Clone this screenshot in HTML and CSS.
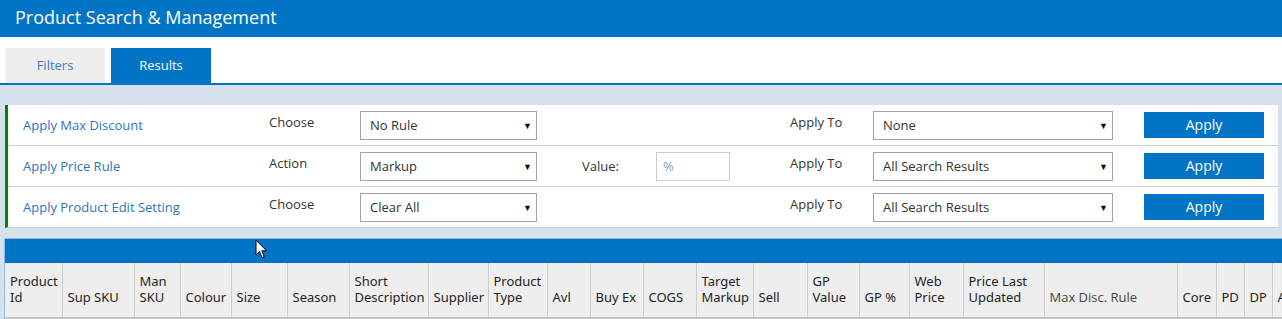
FILE: index.html
```html
<!DOCTYPE html>
<html lang="en">
<head>
  <meta charset="UTF-8">
  <title>Product Search &amp; Management</title>
  <link rel="stylesheet" href="styles.css">
</head>
<body>
  <header class="top-bar">Product Search &amp; Management</header>

  <nav class="tabs">
    <a class="tab">Filters</a>
    <a class="tab active">Results</a>
  </nav>

  <main class="content">
    <!-- Bulk actions -->
    <section class="actions">
      <div class="action-row">
        <a class="action-name">Apply Max Discount</a>
        <span class="field-label">Choose</span>
        <span class="select-wrap narrow"><select><option>No Rule</option></select></span>
        <span></span>
        <span></span>
        <span class="field-label">Apply To</span>
        <span class="select-wrap wide"><select><option>None</option></select></span>
        <button class="btn">Apply</button>
      </div>
      <div class="action-row">
        <a class="action-name">Apply Price Rule</a>
        <span class="field-label">Action</span>
        <span class="select-wrap narrow"><select><option>Markup</option></select></span>
        <span class="value-label">Value:</span>
        <span><input class="value-input" type="text" placeholder="%"></span>
        <span class="field-label">Apply To</span>
        <span class="select-wrap wide"><select><option>All Search Results</option></select></span>
        <button class="btn">Apply</button>
      </div>
      <div class="action-row">
        <a class="action-name">Apply Product Edit Setting</a>
        <span class="field-label">Choose</span>
        <span class="select-wrap narrow"><select><option>Clear All</option></select></span>
        <span></span>
        <span></span>
        <span class="field-label">Apply To</span>
        <span class="select-wrap wide"><select><option>All Search Results</option></select></span>
        <button class="btn">Apply</button>
      </div>
    </section>

    <!-- Results grid -->
    <section class="grid">
      <div class="grid-bar"></div>
      <table class="results">
        <colgroup>
          <col style="width:57px"><col style="width:72px"><col style="width:46px"><col style="width:51px">
          <col style="width:56px"><col style="width:62px"><col style="width:79px"><col style="width:60px">
          <col style="width:59px"><col style="width:43px"><col style="width:53px"><col style="width:53px">
          <col style="width:57px"><col style="width:54px"><col style="width:52px"><col style="width:50px">
          <col style="width:54px"><col style="width:81px"><col style="width:133px"><col style="width:39px">
          <col style="width:28px"><col style="width:28px"><col style="width:40px">
        </colgroup>
        <thead>
          <tr>
            <th>Product<br>Id</th>
            <th>Sup SKU</th>
            <th>Man<br>SKU</th>
            <th>Colour</th>
            <th>Size</th>
            <th>Season</th>
            <th>Short<br>Description</th>
            <th>Supplier</th>
            <th>Product<br>Type</th>
            <th>Avl</th>
            <th>Buy Ex</th>
            <th>COGS</th>
            <th>Target<br>Markup</th>
            <th>Sell</th>
            <th>GP<br>Value</th>
            <th>GP %</th>
            <th>Web<br>Price</th>
            <th>Price Last<br>Updated</th>
            <th class="light">Max Disc. Rule</th>
            <th>Core</th>
            <th>PD</th>
            <th>DP</th>
            <th>Active</th>
          </tr>
        </thead>
      </table>
    </section>
  </main>

  <svg class="cursor" width="13" height="20" viewBox="0 0 13 20">
    <path d="M1 1 L1 16 L4.5 12.5 L7 18.5 L9.2 17.6 L6.8 11.8 L11.5 11.8 Z" fill="#fff" stroke="#000" stroke-width="1"/>
  </svg>
</body>
</html>
```

FILE: styles.css
```css
body {
  margin: 0;
  font-family: "Open Sans", Arial, sans-serif;
  font-size: 13px;
  color: #333;
  background: #d7e1ec;
  overflow: hidden;
}

.top-bar {
  height: 37px;
  line-height: 34px;
  padding-left: 15px;
  background: #0274c6;
  color: #fff;
  font-size: 18px;
}

.tabs {
  display: flex;
  gap: 6px;
  padding: 11px 0 0 5px;
  background: #fff;
  border-bottom: 2px solid #0274c6;
}

.tab {
  width: 100px;
  height: 35px;
  line-height: 35px;
  text-align: center;
  background: #eee;
  color: #3d7cc9;
  font-size: 13px;
}

.tab.active {
  background: #0274c6;
  color: #fff;
}

.content {
  padding: 20px 0 0 5px;
}

.actions {
  width: 1270px;
  background: #fff;
  border-left: 3px solid #0a7d10;
  border-bottom: 1px solid #ccc;
}

.action-row {
  display: grid;
  grid-template-columns: 246px 91px 222px 74px 134px 83px 271px 120px;
  align-items: center;
  height: 40px;
  padding-left: 15px;
  border-bottom: 1px solid #ccc;
}

.action-row:last-child {
  border-bottom: none;
}

.action-name {
  color: #2f74c0;
}

.field-label {
  color: #333;
  margin-bottom: 7px;
}

.value-label {
  color: #333;
}

.select-wrap {
  position: relative;
  display: block;
}

.select-wrap select {
  appearance: none;
  -webkit-appearance: none;
  height: 29px;
  padding: 0 0 0 9px;
  border: 1px solid #a3a3a3;
  border-radius: 0;
  background: #fff;
  font-family: "Open Sans", Arial, sans-serif;
  font-size: 13px;
  color: #333;
}

.select-wrap.narrow select { width: 177px; }
.select-wrap.wide select { width: 240px; }

.select-wrap::after {
  content: "\25BC";
  position: absolute;
  top: 8px;
  font-size: 9px;
  color: #111;
}

.select-wrap.narrow::after { left: 163px; }
.select-wrap.wide::after { left: 226px; }

.value-input {
  box-sizing: border-box;
  width: 74px;
  height: 29px;
  padding: 0 0 0 6px;
  border: 1px solid #ccc;
  font-family: "Open Sans", Arial, sans-serif;
  font-size: 13px;
}

.value-input::placeholder {
  color: #8a9bb0;
}

.btn {
  width: 120px;
  height: 26px;
  border: none;
  background: #0274c6;
  color: #fff;
  font-family: "Open Sans", Arial, sans-serif;
  font-size: 14px;
  padding: 0 0 2px;
}

.grid {
  margin: 10px 0 0 -1px;
  width: 1400px;
  border-left: 1px solid #8fb8e4;
  border-top: 1px solid #8fb8e4;
}

.grid-bar {
  height: 24px;
  background: #0274c6;
}

.results {
  table-layout: fixed;
  border-collapse: collapse;
  width: 1307px;
}

.results th {
  height: 42px;
  padding: 0 2px 12px 5px;
  vertical-align: bottom;
  text-align: left;
  font-family: "Noto Sans", Arial, sans-serif;
  font-size: 13px;
  font-weight: 400;
  line-height: 16px;
  color: #1e1e1e;
  background: #eee;
  border-right: 1px solid #ccc;
  border-bottom: 2px solid #c4c4c4;
  white-space: nowrap;
  overflow: hidden;
}

.results th.light {
  font-family: "Open Sans", Arial, sans-serif;
  color: #444;
}

.cursor {
  position: absolute;
  left: 255px;
  top: 239px;
}
```
